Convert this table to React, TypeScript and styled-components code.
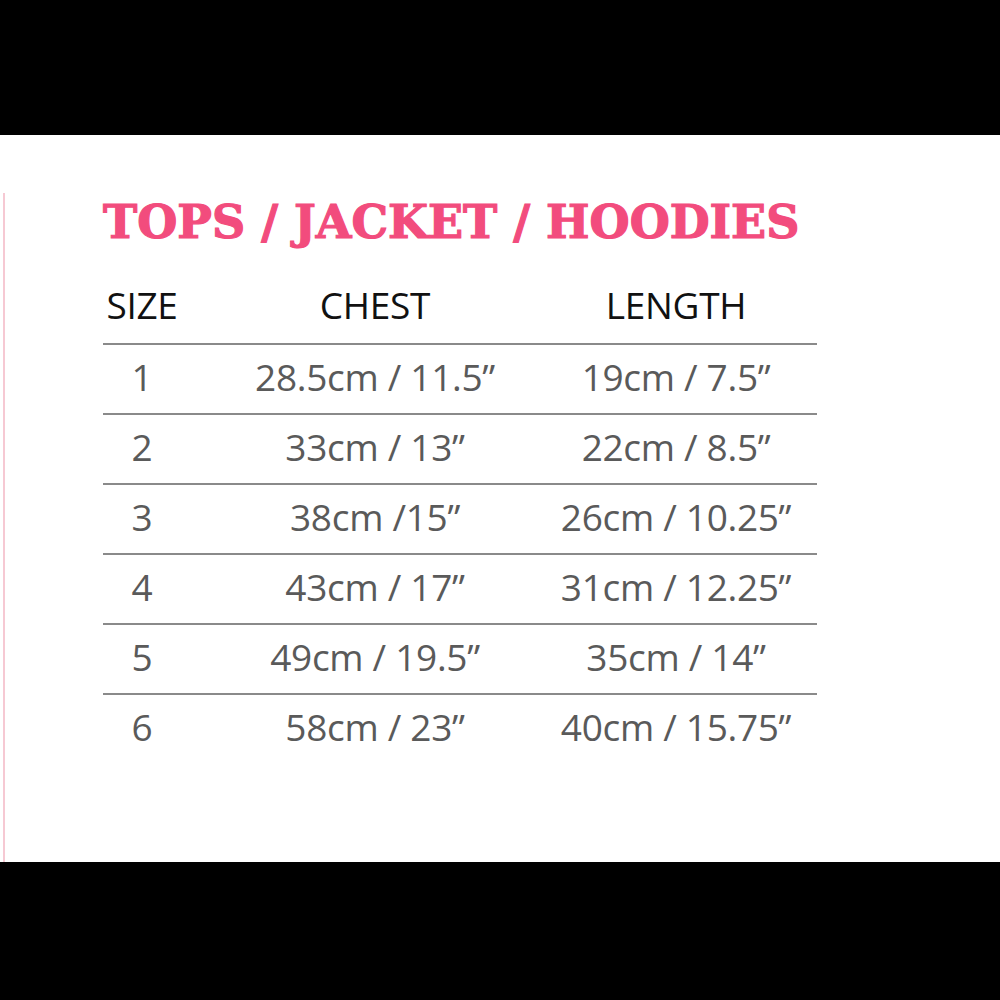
import styled, { createGlobalStyle } from 'styled-components';

const sizes = [
  { size: '1', chest: '28.5cm / 11.5\u201D', length: '19cm / 7.5\u201D' },
  { size: '2', chest: '33cm / 13\u201D', length: '22cm / 8.5\u201D' },
  { size: '3', chest: '38cm /15\u201D', length: '26cm / 10.25\u201D' },
  { size: '4', chest: '43cm / 17\u201D', length: '31cm / 12.25\u201D' },
  { size: '5', chest: '49cm / 19.5\u201D', length: '35cm / 14\u201D' },
  { size: '6', chest: '58cm / 23\u201D', length: '40cm / 15.75\u201D' },
];

export default function App() {
  return (
    <>
      <GlobalStyle />
      <Bar />
      <Sheet>
        <Panel>
          <Title>TOPS / JACKET / HOODIES</Title>
          <Table>
            <Row $head>
              <Cell>SIZE</Cell>
              <Cell>CHEST</Cell>
              <Cell>LENGTH</Cell>
            </Row>
            {sizes.map((s) => (
              <Row key={s.size}>
                <Cell>{s.size}</Cell>
                <Cell>{s.chest}</Cell>
                <Cell>{s.length}</Cell>
              </Row>
            ))}
          </Table>
        </Panel>
      </Sheet>
      <Bar $bottom />
    </>
  );
}

const GlobalStyle = createGlobalStyle`
  html, body {
    margin: 0;
    padding: 0;
    background: #000;
  }
`;

const Bar = styled.div<{ $bottom?: boolean }>`
  height: ${(p) => (p.$bottom ? '138px' : '135px')};
  background: #000;
`;

const Sheet = styled.section`
  height: 727px;
  background: #fff;
  padding-top: 58px;
  box-sizing: border-box;
  display: flex;
`;

const Panel = styled.div`
  margin-left: 3px;
  border-left: 2px solid #f6c9d3;
  flex: 1;
  padding-left: 98px;
  display: flex;
  flex-direction: column;
`;

const Title = styled.h1`
  margin: 0;
  font-family: 'DejaVu Serif', serif;
  font-weight: 900;
  font-size: 46px;
  line-height: 58px;
  color: #f24c7d;
  white-space: nowrap;
  -webkit-text-stroke: 1.2px #f24c7d;
`;

const Table = styled.div`
  margin-top: 18px;
  width: 714px;
  display: flex;
  flex-direction: column;
`;

const Row = styled.div<{ $head?: boolean }>`
  display: grid;
  grid-template-columns: 78px 388px 214px;
  height: ${(p) => (p.$head ? '74px' : '70px')};
  padding-bottom: ${(p) => (p.$head ? '3px' : '5px')};
  align-items: center;
  border-top: ${(p) => (p.$head ? 'none' : '2px solid #8a8a8a')};
  box-sizing: border-box;
  font-family: 'Open Sans', sans-serif;
  font-size: 37px;
  letter-spacing: -0.3px;
  color: ${(p) => (p.$head ? '#111' : '#5a5a5a')};
`;

const Cell = styled.div`
  display: flex;
  justify-content: center;
  white-space: nowrap;
`;
